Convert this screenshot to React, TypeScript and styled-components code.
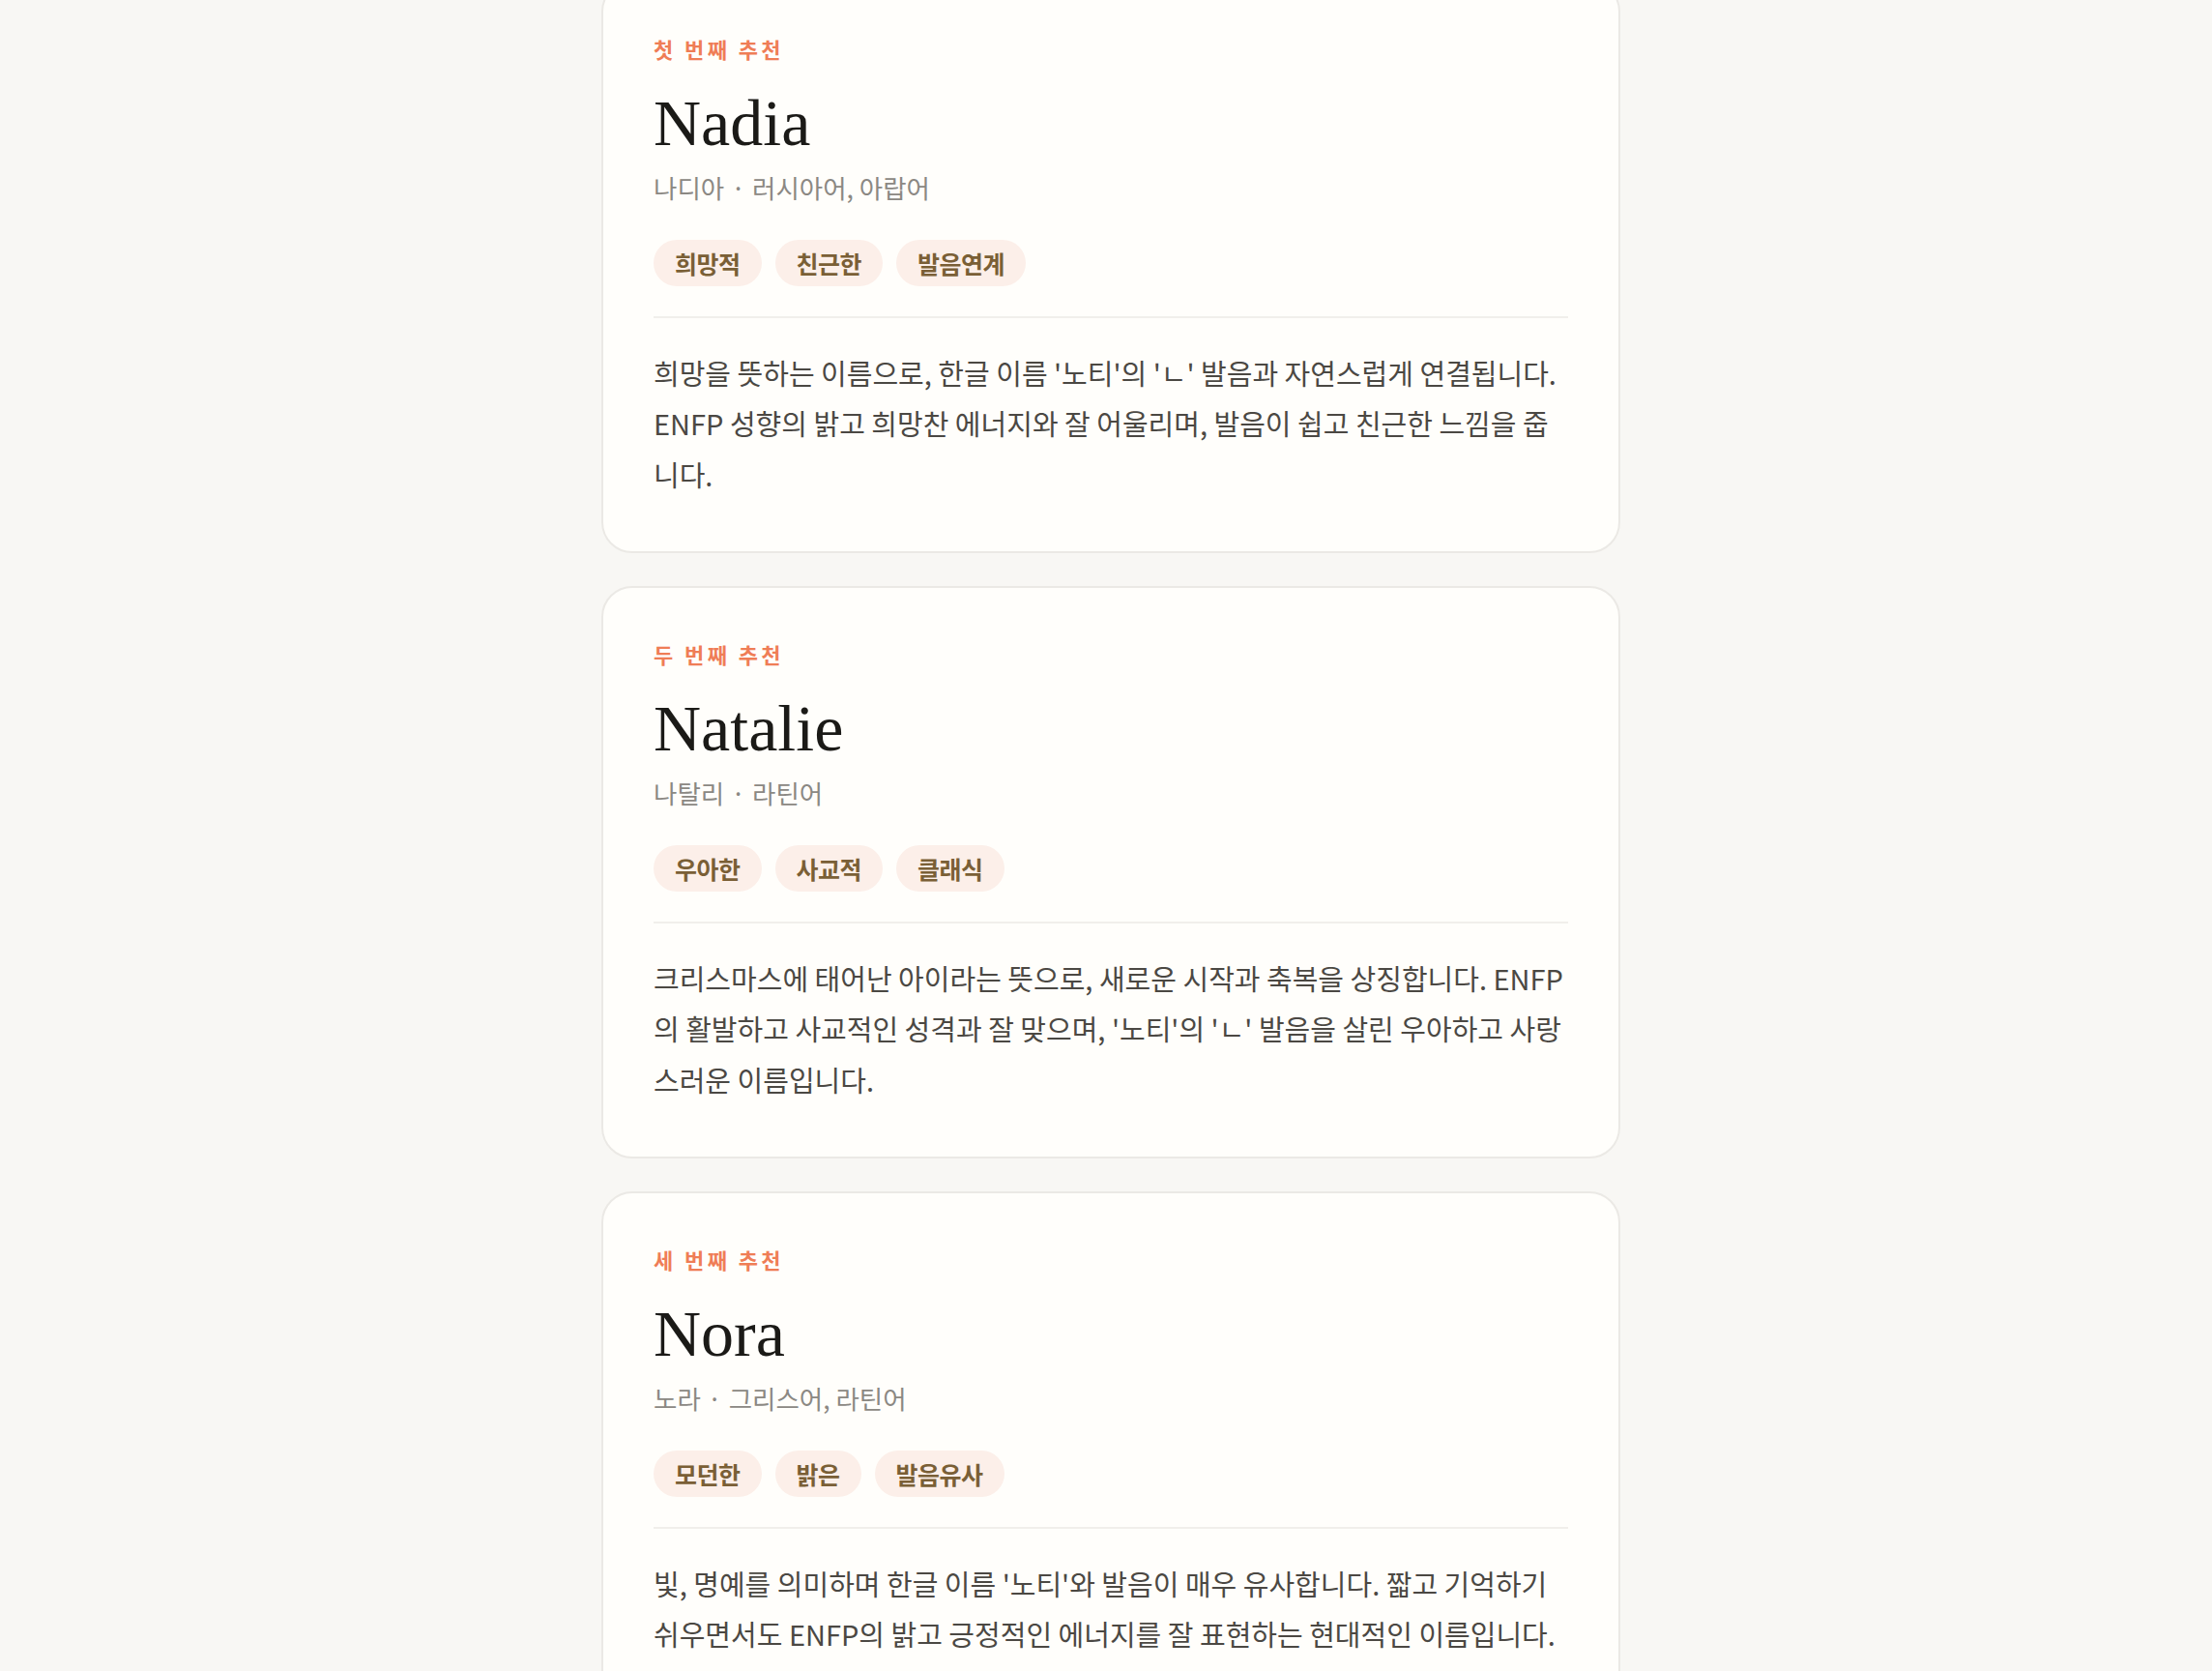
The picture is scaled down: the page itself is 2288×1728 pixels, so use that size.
import React from "react";
import styled, { createGlobalStyle } from "styled-components";

const GlobalStyle = createGlobalStyle`
  html, body {
    margin: 0;
    padding: 0;
    background: #f8f7f4;
  }
  body {
    font-family: "Noto Sans CJK KR", "Noto Sans", sans-serif;
  }
  * { box-sizing: border-box; }
`;

const Page = styled.div`
  min-height: 100vh;
  background: #f8f7f4;
  padding-left: 10px;
`;

const List = styled.div`
  width: 1054px;
  margin: -20px auto 0;
  display: flex;
  flex-direction: column;
  gap: 34px;
`;

const Card = styled.section`
  background: #fffefb;
  border: 2px solid #ebe9e5;
  border-radius: 32px;
  padding: 53px 52px 54px;
  display: flex;
  flex-direction: column;
`;

const Rank = styled.div`
  font-family: "Noto Sans CJK KR", sans-serif;
  font-size: 22px;
  line-height: 30px;
  font-weight: 700;
  letter-spacing: 3.4px;
  color: #ef7d56;
`;

const Name = styled.h2`
  margin: 22px 0 0;
  font-family: "Liberation Serif", "Times New Roman", serif;
  font-size: 68px;
  line-height: 1.2;
  font-weight: 400;
  color: #1b1a17;
`;

const Origin = styled.div`
  margin-top: 7px;
  font-family: "Noto Sans CJK KR", sans-serif;
  font-size: 26.5px;
  line-height: 36px;
  color: #8b8883;
`;

const Dot = styled.span`
  margin: 0 7px;
`;

const Tags = styled.div`
  margin-top: 36px;
  display: flex;
  gap: 14px;
`;

const Tag = styled.span`
  height: 48px;
  padding: 0 22px;
  border-radius: 24px;
  background: #fcefe9;
  color: #7a5f36;
  font-family: "Noto Sans CJK KR", sans-serif;
  font-size: 25px;
  font-weight: 700;
  letter-spacing: -0.5px;
  display: inline-flex;
  align-items: center;
`;

const Description = styled.p`
  margin: 31px 0 0;
  padding-top: 30px;
  border-top: 2px solid #f1efeb;
  font-family: "Noto Sans CJK KR", sans-serif;
  font-size: 29px;
  line-height: 52.5px;
  color: #4b4843;
`;

type Rec = {
  rank: string;
  name: string;
  reading: string;
  lang: string;
  tags: string[];
  desc: string;
};

const recs: Rec[] = [
  {
    rank: "첫 번째 추천",
    name: "Nadia",
    reading: "나디아",
    lang: "러시아어, 아랍어",
    tags: ["희망적", "친근한", "발음연계"],
    desc:
      "희망을 뜻하는 이름으로, 한글 이름 '노티'의 'ㄴ' 발음과 자연스럽게 연결됩니다. ENFP 성향의 밝고 희망찬 에너지와 잘 어울리며, 발음이 쉽고 친근한 느낌을 줍니다.",
  },
  {
    rank: "두 번째 추천",
    name: "Natalie",
    reading: "나탈리",
    lang: "라틴어",
    tags: ["우아한", "사교적", "클래식"],
    desc:
      "크리스마스에 태어난 아이라는 뜻으로, 새로운 시작과 축복을 상징합니다. ENFP의 활발하고 사교적인 성격과 잘 맞으며, '노티'의 'ㄴ' 발음을 살린 우아하고 사랑스러운 이름입니다.",
  },
  {
    rank: "세 번째 추천",
    name: "Nora",
    reading: "노라",
    lang: "그리스어, 라틴어",
    tags: ["모던한", "밝은", "발음유사"],
    desc:
      "빛, 명예를 의미하며 한글 이름 '노티'와 발음이 매우 유사합니다. 짧고 기억하기 쉬우면서도 ENFP의 밝고 긍정적인 에너지를 잘 표현하는 현대적인 이름입니다.",
  },
];

export default function App() {
  return (
    <>
      <GlobalStyle />
      <Page>
        <List>
          {recs.map((r) => (
            <Card key={r.name}>
              <Rank>{r.rank}</Rank>
              <Name>{r.name}</Name>
              <Origin>
                {r.reading}
                <Dot>·</Dot>
                {r.lang}
              </Origin>
              <Tags>
                {r.tags.map((t) => (
                  <Tag key={t}>{t}</Tag>
                ))}
              </Tags>
              <Description>{r.desc}</Description>
            </Card>
          ))}
        </List>
      </Page>
    </>
  );
}
